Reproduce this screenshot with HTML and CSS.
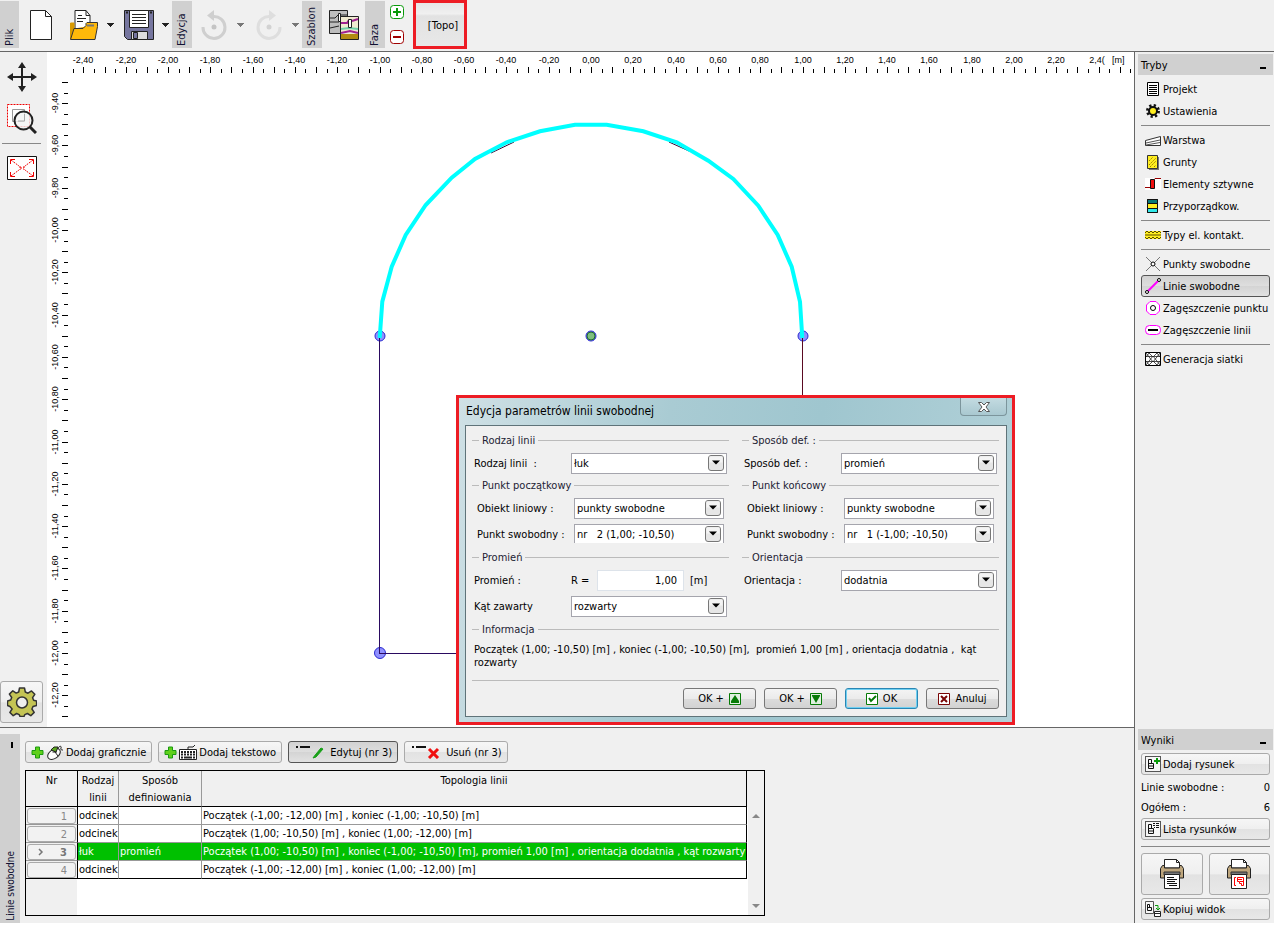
FILE: index.html
```html
<!DOCTYPE html>
<html lang="pl">
<head>
<meta charset="utf-8">
<title>Linie swobodne</title>
<link rel="stylesheet" href="styles.css">
</head>
<body>
<svg class="defs" aria-hidden="true">
  <symbol id="caret" viewBox="0 0 11 30"><path d="M2 13h7v1h-1v1h-1v1h-1v1h-1v-1h-1v-1h-1v-1h-1z" fill="currentColor"/></symbol>
  <symbol id="drop" viewBox="0 0 16 16"><rect x=".5" y=".5" width="15" height="15" rx="2.500" fill="#e6e6e6" stroke="#777"/><path d="M1.500 1.500h13v6h-13z" fill="#f4f4f4"/><path d="M4 5.500h8L8 9.500z" fill="#000"/></symbol>
  <symbol id="plus" viewBox="0 0 13 13"><path d="M4.500 1h4v3.500H12v4H8.500V12h-4V8.500H1v-4h3.500z" fill="#5fd01a" stroke="#1a9a10"/></symbol>
  <symbol id="doc" viewBox="0 0 16 16"><rect x=".5" y=".5" width="15" height="15" fill="#f6f6f6" stroke="#555"/><path d="M3.500 3.500h3v4h2v5h-5zM4 7.500h3M4 10h4" fill="none" stroke="#111"/></symbol>
  <symbol id="printer" viewBox="0 0 24 30"><path d="M4.500 9V.5h12l3 3V9z" fill="#fff" stroke="#222"/><path d="M16.500 .5v3h3" fill="none" stroke="#222"/><path d="M2.500 6.500h2V9h15V6.500h2l2 3V19H.5V9.500z" fill="#bda57c" stroke="#222"/><path d="M4 13h16v3H4z" fill="#777" stroke="#333"/></symbol>
</svg>
<div class="app">
  <header class="toolbar">
    <span class="group-label">Plik</span>
    <button class="tool first" type="button" aria-label="Nowy"><svg width="30" height="32" viewBox="0 0 30 32"><path d="M4.500 1.500h15l6 6v23h-21z" fill="#fff" stroke="#222"/><path d="M19.500 1.500v6h6" fill="none" stroke="#222"/></svg></button>
    <button class="tool file" type="button" aria-label="Otwórz"><svg width="30" height="32" viewBox="0 0 30 32"><path d="M6 25V1.500h11l4 5V25" fill="#fff" stroke="#222"/><path d="M17 1.500v5h4M9 6.500h4M8 9.500h9M8 12.500h6" fill="none" stroke="#222"/><path d="M1.500 30V14h3.500v6l20-3v13z" fill="#d99a00" stroke="#d99a00"/><path d="M5 19.500h9l3-3v-2l1-1h10.500v4L26 30.500H1.500z" fill="#ffb90a" stroke="#333"/><path d="M18 16.500h7" stroke="#777" stroke-width="2"/></svg></button>
    <button class="caret" type="button" aria-label="Ostatnie pliki"><svg width="11" height="30"><use href="#caret"/></svg></button>
    <button class="tool next" type="button" aria-label="Zapisz"><svg width="30" height="32" viewBox="0 0 30 32"><path d="M.5 1.500h29v29h-26l-3-3z" fill="#76769f" stroke="#222"/><path d="M5.500 1.500h19v17h-19z" fill="#fff" stroke="#222"/><path d="M8 5.500h14M8 8.500h14M8 11.500h14M8 14.500h14" stroke="#222"/><path d="M2 3.500h2M26 3.500h2" stroke="#222" stroke-width="2"/><path d="M7.500 22.500h16v8h-16z" fill="#ddd" stroke="#222"/><path d="M9.500 23.500h4v6h-4z" fill="#76769f" stroke="#222"/></svg></button>
    <button class="caret" type="button" aria-label="Opcje zapisu"><svg width="11" height="30"><use href="#caret"/></svg></button>
    <span class="group-label">Edycja</span>
    <button class="tool" type="button" aria-label="Cofnij" disabled><svg width="30" height="32" viewBox="0 0 30 32"><path d="M14 7.500A11 11 0 1 1 4 18" fill="none" stroke="#cfcfcf" stroke-width="3"/><path d="M15 1v11L8 6.500z" fill="#cfcfcf"/><circle cx="15" cy="18" r="2.500" fill="#c4c4c4"/></svg></button>
    <button class="caret dim" type="button" aria-label="Historia cofania"><svg width="11" height="30"><use href="#caret"/></svg></button>
    <button class="tool next" type="button" aria-label="Ponów" disabled><svg width="30" height="32" viewBox="0 0 30 32"><path d="M16 7.500A11 11 0 1 0 26 18" fill="none" stroke="#dedede" stroke-width="3"/><path d="M15 1v11l7-5.500z" fill="#dedede"/><circle cx="15" cy="18" r="2.500" fill="#d2d2d2"/></svg></button>
    <button class="caret dim" type="button" aria-label="Historia ponawiania"><svg width="11" height="30"><use href="#caret"/></svg></button>
    <span class="group-label">Szablon</span>
    <button class="tool" type="button" aria-label="Szablon"><svg width="30" height="32" viewBox="0 0 30 32"><path d="M.5 1.500h18v23H.5z" fill="#bdbdbd" stroke="#222"/><path d="M1 9h5l3-3h2M1 13h9M1 19l9-2M12 6h6" fill="none" stroke="#222"/><path d="M9.500 4.500h2v8h-2z" fill="#fff" stroke="#222"/><path d="M11.500 7.500h18v23h-18z" fill="#f0ead0" stroke="#222"/><path d="M12 25h17v5H12z" fill="#b38b12"/><path d="M12 24l9-2 8 2M12 14h6l2-3M23 12l6-2" fill="none" stroke="#a02090" stroke-width="2"/><path d="M12 20l8-1 9 1" fill="none" stroke="#6fd0a8" stroke-width="2"/><path d="M19.500 10.500h3v8h-3z" fill="#fff" stroke="#222"/></svg></button>
    <span class="group-label phase">Faza</span>
    <div class="phase-buttons">
      <button type="button" aria-label="Dodaj fazę"><svg width="14" height="14" viewBox="0 0 14 14"><rect x=".5" y=".5" width="13" height="13" rx="3" fill="#fff" stroke="#0a9a0a"/><path d="M3 7h8M7 3v8" stroke="#0a9a0a" stroke-width="2"/></svg></button>
      <button type="button" aria-label="Usuń fazę"><svg width="14" height="14" viewBox="0 0 14 14"><rect x=".5" y=".5" width="13" height="13" rx="3" fill="#fff" stroke="#a00000"/><path d="M3 7h8" stroke="#a00000" stroke-width="2"/></svg></button>
    </div>
    <button class="topo" type="button">[Topo]</button>
  </header>

  <div class="work">
    <nav class="side-tools" aria-label="Widok">
      <button type="button" aria-label="Przesuń"><svg width="30" height="30" viewBox="0 0 30 30"><path d="M15 4v22M4 15h22" stroke="#222" stroke-width="2"/><path d="M15 0l4 6h-8zM15 30l4-6h-8zM0 15l6-4v8zM30 15l-6-4v8z" fill="#222"/></svg></button>
      <button type="button" aria-label="Powiększ"><svg width="30" height="30" viewBox="0 0 30 30"><path d="M.5 .5h22v22H.5z" fill="#fff" stroke="#e00" stroke-dasharray="2 1"/><path d="M5.500 5.500h12v12h-12z" fill="none" stroke="#999"/><circle cx="16.500" cy="16.500" r="9" fill="#f4f4f4" fill-opacity=".8" stroke="#222" stroke-width="2"/><path d="M11 17h6.500v-7" fill="none" stroke="#aaa"/><path d="M23 23l6 6" stroke="#222" stroke-width="3"/></svg></button>
      <hr>
      <button type="button" aria-label="Dopasuj widok"><svg width="30" height="24" viewBox="0 0 30 24"><path d="M.5 .5h29v23H.5z" fill="#fff" stroke="#111"/><g fill="none" stroke="#e00"><path d="M4 4l8 6M26 4l-8 6M4 20l8-6M26 20l-8-6M13 10v4M17 10v4M13 12h4" stroke-dasharray="2 1"/><path d="M3.500 8V3.500H8M22 3.500h4.500V8M3.500 16v4.500H8M22 20.500h4.500V16"/></g></svg></button>
      <button class="gear" type="button" aria-label="Ustawienia widoku"><svg width="30" height="30" viewBox="0 0 30 30"><path d="M12.500 1h5l.8 4 2.700 1.200 3.500-2.300 3.300 3.400-2.200 3.400 1 2.600 3 .7v4.500l-3.600 1-1.100 2.500 2.300 3.400-3.400 3.300-3.400-2.200-2.600 1.100-.8 1.900h-4l-.8-1.900-2.600-1.100-3.400 2.200-3.300-3.300 2.200-3.400L3 19.500l-2.500-1V14l3.200-1 1-2.500-2.300-3.400 3.400-3.300 3.400 2.300L11.700 5z" fill="#c4c455" stroke="#333" stroke-width="1.500" stroke-linejoin="round"/><circle cx="15" cy="15.500" r="5.500" fill="#eee" stroke="#333" stroke-width="1.500"/></svg></button>
    </nav>

    <main class="canvas">
      <svg class="drawing" width="100%" height="100%" role="img" aria-label="Model topologii">
        <g transform="translate(-47 -52)">
          <g id="ruler-x"></g>
          <text class="ruler-text" x="1112" y="63">[m]</text>
          <g id="ruler-y"></g>
          <g fill="#9090ff" stroke="#2a2ad0">
            <circle cx="380" cy="336" r="5"/><circle cx="803" cy="336" r="5"/><circle cx="591" cy="336" r="5"/><circle cx="380" cy="653" r="5.500"/>
          </g>
          <circle cx="591" cy="336" r="4" fill="#7fbf7f" stroke="#1c6b2c"/>
          <path d="M379.500 336V653.500H802.500" fill="none" stroke="#2a0a60" shape-rendering="crispEdges"/>
          <path d="M802.500 336V653" stroke="#5a0a22" shape-rendering="crispEdges"/>
          <path d="M491 153l23-11M669 142l20 9" stroke="#3a0030"/>
          <path d="M379.700 338L382.300 301.700 391.700 266.700 405.700 235 425.700 205 451.700 177.700 475 159 506.700 142.300 540 131.300 575 124.700H606.700L643.300 131.300 676.700 142.300 708.300 160.700 733.300 179 758.300 205.700 777.700 235 791.700 266.700 800 301.700 802.300 338" fill="none" stroke="#0ff" stroke-width="4"/>
        </g>
      </svg>

      <section class="dialog" role="dialog" aria-labelledby="dlg-title">
        <div class="titlebar">
          <h1 id="dlg-title">Edycja parametrów linii swobodnej</h1>
          <button class="close" type="button" aria-label="Zamknij"><svg width="12" height="10" viewBox="0 0 12 10"><path d="M.5 .5h3L6 3 8.500 .5h3L8 5l3.500 4.500h-3L6 7 3.500 9.500h-3L4 5z" fill="#fff" stroke="#555"/></svg></button>
        </div>
        <form class="client">
          <div class="columns">
            <div class="column">
              <h2>Rodzaj linii</h2>
              <div class="row"><label for="kind">Rodzaj linii&nbsp; :</label><span class="pick"><select id="kind"><option>łuk</option></select><svg width="16" height="16"><use href="#drop"/></svg></span></div>
              <h2>Punkt początkowy</h2>
              <div class="row inner"><label for="obj1">Obiekt liniowy :</label><span class="pick"><select id="obj1"><option>punkty swobodne</option></select><svg width="16" height="16"><use href="#drop"/></svg></span></div>
              <div class="row inner cut"><label for="pt1">Punkt swobodny :</label><span class="pick"><select id="pt1"><option>nr&nbsp;&nbsp; 2 (1,00; -10,50)</option></select><svg width="16" height="16"><use href="#drop"/></svg></span></div>
              <h2>Promień</h2>
              <div class="row"><label for="radius">Promień :</label><span class="radius"><span>R =</span><input id="radius" type="text" value="1,00"><span>[m]</span></span></div>
              <div class="row second"><label for="angle">Kąt zawarty</label><span class="pick"><select id="angle"><option>rozwarty</option></select><svg width="16" height="16"><use href="#drop"/></svg></span></div>
            </div>
            <div class="column">
              <h2>Sposób def. :</h2>
              <div class="row"><label for="def">Sposób def. :</label><span class="pick"><select id="def"><option>promień</option></select><svg width="16" height="16"><use href="#drop"/></svg></span></div>
              <h2>Punkt końcowy</h2>
              <div class="row inner"><label for="obj2">Obiekt liniowy :</label><span class="pick"><select id="obj2"><option>punkty swobodne</option></select><svg width="16" height="16"><use href="#drop"/></svg></span></div>
              <div class="row inner cut"><label for="pt2">Punkt swobodny :</label><span class="pick"><select id="pt2"><option>nr&nbsp;&nbsp; 1 (-1,00; -10,50)</option></select><svg width="16" height="16"><use href="#drop"/></svg></span></div>
              <h2>Orientacja</h2>
              <div class="row"><label for="orient">Orientacja :</label><span class="pick"><select id="orient"><option>dodatnia</option></select><svg width="16" height="16"><use href="#drop"/></svg></span></div>
            </div>
          </div>
          <h2>Informacja</h2>
          <p class="info">Początek (1,00; -10,50) [m] , koniec (-1,00; -10,50) [m],&nbsp; promień 1,00 [m] , orientacja dodatnia ,&nbsp; kąt rozwarty</p>
          <div class="actions">
            <button type="button">OK + <svg width="12" height="12" viewBox="0 0 12 12"><path d="M.5 .5h11v11H.5z" fill="#dff0df" stroke="#067a06"/><path d="M6 2l4 6v2H2V8z" fill="#067a06"/></svg></button>
            <button type="button">OK + <svg width="12" height="12" viewBox="0 0 12 12"><path d="M.5 .5h11v11H.5z" fill="#dff0df" stroke="#067a06"/><path d="M2 2h8v1L6 10 2 3z" fill="#067a06"/></svg></button>
            <button class="default" type="button"><svg width="12" height="12" viewBox="0 0 12 12"><path d="M.5 .5h11v11H.5z" fill="#fff" stroke="#067a06"/><path d="M3 5l2 3 5-5" fill="none" stroke="#067a06" stroke-width="2"/></svg> OK</button>
            <button type="button"><svg width="12" height="12" viewBox="0 0 12 12"><path d="M.5 .5h11v11H.5z" fill="#fff" stroke="#7a0606"/><path d="M3 3l6 6M9 3l-6 6" stroke="#7a0606" stroke-width="2"/></svg> Anuluj</button>
          </div>
        </form>
      </section>
    </main>
  </div>

  <section class="bottom">
    <div class="strip"><i></i><span>Linie swobodne</span></div>
    <div class="panel">
      <div class="commands">
        <button type="button"><svg width="13" height="13"><use href="#plus"/></svg><svg width="18" height="15" viewBox="0 0 18 15"><ellipse cx="8" cy="9" rx="7" ry="4.500" transform="rotate(-35 8 9)" fill="#fff" stroke="#222"/><path d="M6 3l6 8M11 7L6.500 7" stroke="#222" fill="none"/><path d="M5 5l3-3 4 0-2 5z" fill="#5aa51e" stroke="#222"/><path d="M12 4c1-4 4-3 3-1s1 2 2 2" fill="none" stroke="#222"/></svg>Dodaj graficznie</button>
        <button type="button"><svg width="13" height="13"><use href="#plus"/></svg><svg width="18" height="15" viewBox="0 0 18 15"><path d="M9 4V2h5l2-2" fill="none" stroke="#222"/><path d="M.5 4.500h17v10H.5z" fill="#fff" stroke="#222"/><path d="M2 7h14M2 9.500h14" stroke="#222" stroke-width="2" stroke-dasharray="2 1"/><path d="M2 12.500h2M5 12.500h8M14 12.500h2" stroke="#222" stroke-width="2"/></svg>Dodaj tekstowo</button>
        <button class="pressed" type="button"><svg width="34" height="14" viewBox="0 0 34 14"><path d="M2 2h2M6 2h10" stroke="#111" stroke-width="2"/><path d="M20 11.500L27 3l2 1-7 8-3 1z" fill="#18a018" stroke="#18a018"/></svg>Edytuj (nr 3)</button>
        <button type="button"><svg width="34" height="14" viewBox="0 0 34 14"><path d="M2 2h2M6 2h10" stroke="#111" stroke-width="2"/><path d="M19 4l9 9M28 4l-9 9" stroke="#f01010" stroke-width="3"/></svg>Usuń (nr 3)</button>
      </div>
      <div class="grid-box">
        <table>
          <thead><tr><th>Nr</th><th>Rodzaj linii</th><th>Sposób definiowania</th><th>Topologia linii</th></tr></thead>
          <tbody>
            <tr><td><span class="num">1</span></td><td>odcinek</td><td></td><td>Początek (-1,00; -12,00) [m] , koniec (-1,00; -10,50) [m]</td></tr>
            <tr><td><span class="num">2</span></td><td>odcinek</td><td></td><td>Początek (1,00; -10,50) [m] , koniec (1,00; -12,00) [m]</td></tr>
            <tr class="selected"><td><span class="num"><svg width="6" height="8" viewBox="0 0 6 8"><path d="M1 1l3 3-3 3" fill="none" stroke="#777" stroke-width="1.500"/></svg>3</span></td><td>łuk</td><td>promień</td><td>Początek (1,00; -10,50) [m] , koniec (-1,00; -10,50) [m], promień 1,00 [m] , orientacja dodatnia , kąt rozwarty</td></tr>
            <tr><td><span class="num">4</span></td><td>odcinek</td><td></td><td>Początek (-1,00; -12,00) [m] , koniec (1,00; -12,00) [m]</td></tr>
          </tbody>
        </table>
        <div class="scroll"><svg width="8" height="5" viewBox="0 0 8 5"><path d="M0 5l4-4 4 4z" fill="#888"/></svg><svg width="8" height="5" viewBox="0 0 8 5"><path d="M0 0l4 4 4-4z" fill="#888"/></svg></div>
      </div>
    </div>
  </section>

  <aside class="modes">
    <div class="head"><span>Tryby</span><i></i></div>
    <nav class="mode-list">
      <button type="button"><svg width="16" height="16" viewBox="0 0 16 16"><path d="M2.500 1.500h11v13h-11z" fill="#fff" stroke="#000"/><path d="M4 4.500h8M4 6.500h8M4 8.500h8M4 10.500h8M4 12.500h8" stroke="#000"/></svg>Projekt</button>
      <button type="button"><svg width="16" height="16" viewBox="0 0 16 16"><circle cx="8" cy="8" r="5.500" fill="none" stroke="#111" stroke-width="3" stroke-dasharray="2.160"/><circle cx="8" cy="8" r="4" fill="#ffee20" stroke="#111" stroke-width="2"/></svg>Ustawienia</button>
      <hr>
      <button type="button"><svg width="16" height="16" viewBox="0 0 16 16"><path d="M.5 13.500v-5l15-4v9z" fill="#fff" stroke="#333"/><path d="M1 11l14-3M1 13l14-2.500" stroke="#555"/></svg>Warstwa</button>
      <button type="button"><svg width="16" height="16" viewBox="0 0 16 16"><path d="M4 3h10v13H4z" fill="#777"/><path d="M2.500 1.500h10v13h-10z" fill="#ffee20" stroke="#333"/><path d="M4 7l4-4M4 11l7-7M5 13l6-6M9 13l2-2" stroke="#a08000" stroke-dasharray="2 1"/></svg>Grunty</button>
      <button type="button"><svg width="16" height="16" viewBox="0 0 16 16"><path d="M0 2h16v12H0z" fill="#fff"/><path d="M0 11.500h5M9 3.500l1-1h6" fill="none" stroke="#900"/><path d="M5.500 3.500h4v9h-4z" fill="#f01010" stroke="#111"/></svg>Elementy sztywne</button>
      <button type="button"><svg width="16" height="16" viewBox="0 0 16 16"><path d="M2.500 1.500h10v13h-10z" fill="#ffee20" stroke="#111"/><path d="M2.500 1.500h10v4h-10z" fill="#087878" stroke="#111"/><path d="M2.500 10.500h10v4h-10z" fill="#30e8e8" stroke="#111"/></svg>Przyporządkow.</button>
      <hr>
      <button type="button"><svg width="16" height="16" viewBox="0 0 16 16"><path d="M0 4h16v8H0z" fill="#ffee20"/><path d="M0 6l2-2 2 2 2-2 2 2 2-2 2 2 2-2 2 2M0 10l2 2 2-2 2 2 2-2 2 2 2-2 2 2 2-2M0 8h16" fill="none" stroke="#5a4a00"/></svg>Typy el. kontakt.</button>
      <hr>
      <button type="button"><svg width="16" height="16" viewBox="0 0 16 16"><path d="M1 1l14 14M15 1L1 15" stroke="#777"/><circle cx="8" cy="8" r="2" fill="#fff" stroke="#000"/></svg>Punkty swobodne</button>
      <button class="active" type="button"><svg width="16" height="16" viewBox="0 0 16 16"><path d="M2 14L14 2" stroke="#f0f" stroke-width="2"/><circle cx="2" cy="14" r="1.500" fill="#fff" stroke="#000"/><circle cx="14" cy="2" r="1.500" fill="#fff" stroke="#000"/></svg>Linie swobodne</button>
      <button type="button"><svg width="16" height="16" viewBox="0 0 16 16"><path d="M5 1.500h6L14.500 5v6L11 14.500H5L1.500 11V5z" fill="#fff" stroke="#f0f"/><circle cx="8" cy="8" r="2.500" fill="none" stroke="#000"/></svg>Zagęszczenie punktu</button>
      <button type="button"><svg width="16" height="16" viewBox="0 0 16 16"><rect x=".5" y="3.500" width="15" height="9" rx="4" fill="#fff" stroke="#f0f"/><path d="M3 8h10" stroke="#000" stroke-width="2"/></svg>Zagęszczenie linii</button>
      <hr>
      <button type="button"><svg width="16" height="16" viewBox="0 0 16 16"><path d="M.5 1.500h15v13H.5z" fill="#fff" stroke="#000"/><path d="M1 5.500h14M1 10.500h14M1 2l7 9 7-9M1 14l7-9 7 9M1 6l3-4 4 4 4-4 3 4M1 10l3 4 4-4 4 4 3-4" fill="none" stroke="#222" stroke-width=".8"/></svg>Generacja siatki</button>
    </nav>
    <div class="head results"><span>Wyniki</span><i></i></div>
    <div class="result-list">
      <button class="raised" type="button"><svg width="16" height="16" viewBox="0 0 16 16"><use href="#doc"/><path d="M9 5h6M12 2v6" stroke="#0a9a0a" stroke-width="2"/></svg>Dodaj rysunek</button>
      <div class="count"><span>Linie swobodne :</span><span>0</span></div>
      <div class="count"><span>Ogółem :</span><span>6</span></div>
      <button class="raised" type="button"><svg width="16" height="16" viewBox="0 0 16 16"><use href="#doc"/><path d="M8 2.500h2M11 2.500h3M8 4.500h2M11 4.500h3M9 6.500h1M11 6.500h3" stroke="#111"/></svg>Lista rysunków</button>
      <hr>
      <div class="print">
        <button class="raised" type="button" aria-label="Drukuj raport"><svg width="24" height="30" viewBox="0 0 24 30"><use href="#printer"/><path d="M4.500 15.500h15v14h-15z" fill="#fff" stroke="#222"/><path d="M7 18.500h7M7 20.500h10M7 22.500h8M7 24.500h10M9 26.500h8" stroke="#111"/></svg></button>
        <button class="raised" type="button" aria-label="Drukuj rysunek"><svg width="24" height="30" viewBox="0 0 24 30"><use href="#printer"/><path d="M4.500 15.500h15v14h-15z" fill="#fff" stroke="#222"/><path d="M9 18.500H7.500v8H9M10.500 18.500h6v8h-2v-2h-2v-2h-2zM11 20.500h4M13 22.500h3" fill="none" stroke="#f00"/></svg></button>
      </div>
      <button class="raised" type="button"><svg width="16" height="16" viewBox="0 0 16 16"><path d="M.5 .5h8v12h-8z" fill="#f6f6f6" stroke="#555"/><path d="M2.500 3.500h2v3h2v3h-4zM3 6.500h2" fill="none" stroke="#111"/><path d="M10 4.500h3V8M11 7l2 2 2-2" fill="none" stroke="#0a9a0a"/><path d="M9.500 10.500h6v5h-6zM9 12.500h7" fill="#fff" stroke="#222"/></svg>Kopiuj widok</button>
    </div>
  </aside>
</div>
<script src="rulers.js"></script>
</body>
</html>
```
FILE: rulers.js
```js
// Draws the two rulers; one metre of the model is SCALE pixels long.
const NS = 'http://www.w3.org/2000/svg';
const SCALE = 211.5;
const ORIGIN_X = 591;
const ROW_TEN = 230;

function add(parent, name, attrs, text) {
  const node = document.createElementNS(NS, name);
  for (const key in attrs) node.setAttribute(key, attrs[key]);
  if (text) node.textContent = text;
  parent.appendChild(node);
}

const format = v => v.toFixed(2).replace('.', ',');
const rulerX = document.getElementById('ruler-x');
const rulerY = document.getElementById('ruler-y');

for (let i = -49; i <= 51; i++) {
  const x = Math.round(ORIGIN_X + i * SCALE / 20);
  const long = i % 2 === 0;
  add(rulerX, 'rect', { x, y: long ? 67 : 69, width: 1, height: long ? 6 : 4 });
  if (i % 4 === 0) {
    const last = i === 48;
    add(rulerX, 'text', { x: last ? x - 2 : x, y: 63, class: 'ruler-text mid' }, last ? '2,4(' : format(i / 20));
  }
}

for (let i = -14; i <= 46; i++) {
  const y = Math.round(ROW_TEN + i * SCALE / 20);
  const long = i % 2 === 0;
  add(rulerY, 'rect', { x: long ? 62 : 64, y, width: long ? 6 : 4, height: 1 });
  if (i % 4 === 0 && i > -13) {
    add(rulerY, 'text', { class: 'ruler-text mid', transform: `translate(58 ${y}) rotate(-90)` }, format(-10 - i / 20));
  }
}
```
FILE: styles.css
```css
* { box-sizing: border-box; }
body {
  margin: 0;
  background: #fff;
  color: #000;
  font: 11px/13px "DejaVu Sans Condensed", "Noto Sans", sans-serif;
}
button, select, input { font: inherit; color: inherit; margin: 0; }
button { padding: 0; border: 0; background: none; display: flex; align-items: center; }
svg { display: block; flex: none; }
h1, h2, p { margin: 0; font: inherit; }
hr { border: 0; border-top: 1px solid #888; margin: 3px 0; width: 100%; }
.defs { position: absolute; width: 0; height: 0; }

.app {
  display: grid;
  grid-template: 52px 1fr 196px / 1fr 140px;
  grid-template-areas: "bar bar" "work modes" "bottom modes";
  height: 100vh;
  min-height: 900px;
  padding: 0 7px 2px 0;
}

/* toolbar */
.toolbar { grid-area: bar; display: flex; background: #f0f0f0; border-bottom: 1px solid #666; }
.group-label {
  writing-mode: vertical-rl;
  transform: rotate(180deg);
  width: 20px;
  height: 47px;
  margin: 1px 0 0 1px;
  padding: 2px 0 0 0;
  line-height: 20px;
  background: #d0d0d0;
  color: #113;
}
.group-label:first-child { width: 19px; margin-left: 0; }
.group-label.phase { margin-left: 6px; }
.tool { height: 50px; margin-left: 7px; }
.tool.file { margin-left: 13px; }
.tool.next { margin-left: 8px; }
.caret { height: 50px; margin-left: 6px; color: #222; }
.caret.dim { color: #777; }
.phase-buttons { display: flex; flex-direction: column; gap: 11px; padding: 5px 0 0 5px; }
.topo {
  width: 54px;
  height: 49px;
  margin-left: 9px;
  padding: 2px 0 0 6px;
  justify-content: center;
  border: 3px solid #ed1c24;
  background: linear-gradient(#e6e6e6, #f0f0f0 25%, #e2e2e2 30%, #e8e8e8);
}

/* work area */
.work { grid-area: work; display: flex; min-width: 0; }
.side-tools {
  width: 47px;
  flex: none;
  display: flex;
  flex-direction: column;
  gap: 12px;
  padding: 10px 4px 4px 0;
  background: #f0f0f0;
}
.side-tools button { padding-left: 7px; }
.side-tools hr { width: 39px; margin: -3px 2px 0; }
.side-tools .gear {
  width: 43px;
  height: 42px;
  margin-top: auto;
  padding: 0;
  justify-content: center;
}
.gear, .raised, .commands button {
  border: 1px solid #aaa;
  border-radius: 3px;
  background: linear-gradient(#f6f6f6, #efefef 50%, #e2e2e2 52%, #e8e8e8);
}
.canvas { position: relative; flex: 1; min-width: 0; overflow: hidden; background: #fff; }
.drawing { position: absolute; inset: 0; }
.ruler-text { font: 9px "Liberation Sans", Arial, sans-serif; }
.mid { text-anchor: middle; }

/* dialog */
.dialog {
  position: absolute;
  left: 409px;
  top: 343px;
  width: 559px;
  border: 3px solid #ed1c24;
  padding: 0 5px 5px 6px;
  background: linear-gradient(100deg, #cfe0e5, #a9cbd3 35%, #9fc6cf 60%, #b4d2d9);
}
.titlebar { display: flex; justify-content: space-between; height: 27px; }
.titlebar h1 { padding: 6px 1px; font-size: 12px; line-height: 15px; }
.close {
  width: 47px;
  height: 18px;
  justify-content: center;
  border: 1px solid #7c959c;
  border-top: 0;
  border-radius: 0 0 4px 4px;
  background: linear-gradient(#c3dbe1, #a9c8d0);
}
.client { border: 1px solid #5f7379; background: #f0f0f0; padding: 5px 7px 7px 6px; }
.columns { display: grid; grid-template-columns: 1fr 1fr; gap: 13px; margin-bottom: 3px; }
h2 { display: flex; align-items: center; gap: 3px; height: 18px; white-space: nowrap; color: #223; }
h2::before, h2::after { content: ""; height: 1px; background: #bbb; }
h2::before { width: 7px; }
h2::after { flex: 1; }
.row { display: grid; grid-template-columns: 97px 1fr; align-items: center; height: 21px; margin: 4px 2px 2px; white-space: nowrap; }
.row.inner { margin-left: 5px; margin-right: 5px; }
.row.inner.cut { height: 19px; margin: 5px; overflow: hidden; align-items: start; }
.row.cut label { line-height: 21px; }
.row.second { margin: 5px 2px 0; }
.row.inner:not(.cut) { margin-bottom: 0; }
.pick { position: relative; display: block; }
.pick svg { position: absolute; right: 3px; top: 2px; pointer-events: none; }
.pick select {
  display: block;
  width: 100%;
  height: 21px;
  padding: 0 20px 0 2px;
  border: 1px solid #a5a5ad;
  border-radius: 0;
  background: #fff;
  appearance: none;
}
.radius { display: grid; grid-template-columns: 26px 87px 1fr; align-items: center; }
.radius input { width: 100%; height: 21px; padding: 0 6px; border: 1px solid #dde3ea; text-align: right; background: #fff; }
.radius span:last-child { padding-left: 6px; }
.info { padding: 5px 8px 11px 2px; height: 42px; }
.actions { display: flex; justify-content: flex-end; gap: 8px; padding-top: 7px; border-top: 1px solid #bbb; }
.actions button {
  width: 73px;
  height: 21px;
  justify-content: center;
  gap: 5px;
  border: 1px solid #777;
  border-radius: 3px;
  background: linear-gradient(#f4f4f4, #ebebeb 50%, #dcdcdc 52%, #d2d2d2);
}
.actions .default { border-color: #2a86b4; box-shadow: inset 0 0 0 1px #6fd0f2; }

/* bottom panel */
.bottom { grid-area: bottom; display: flex; gap: 5px; padding-top: 6px; background: #f0f0f0; border-top: 1px solid #666; min-width: 0; }
.strip { display: flex; flex-direction: column; justify-content: space-between; align-items: center; width: 20px; background: #d0d0d0; padding: 8px 0 2px; }
.strip i { width: 2px; height: 6px; margin-left: 4px; background: #000; }
.strip span { writing-mode: vertical-rl; transform: rotate(180deg); font-size: 10px; color: #113; }
.panel { padding-top: 7px; min-width: 0; }
.commands { display: flex; gap: 6px; margin-bottom: 7px; }
.commands button { height: 22px; gap: 2px; padding: 0 5px; white-space: nowrap; }
.commands .pressed, .mode-list .active {
  border: 1px solid #555;
  border-radius: 3px;
  background: linear-gradient(#d2d2d2, #dedede 50%, #d4d4d4 52%, #e2e2e2);
}
.grid-box {
  display: flex;
  justify-content: space-between;
  align-items: flex-start;
  width: 740px;
  height: 146px;
  border: 1px solid #000;
  background: linear-gradient(#f0f0f0, #f0f0f0) right top / 18px 36px no-repeat, linear-gradient(90deg, #f0f0f0 51px, #fff 51px);
}
table { width: 721px; table-layout: fixed; border-collapse: separate; border-spacing: 0; }
th, td { padding: 0 0 0 1px; border-right: 1px solid #999; border-bottom: 1px solid #999; font-weight: 400; text-align: left; white-space: nowrap; overflow: hidden; height: 18px; line-height: 17px; background: #fff; }
th { height: 36px; padding: 0; line-height: 17px; white-space: normal; text-align: center; vertical-align: top; background: #f0f0f0; border-bottom-color: #000; padding-top: 1px; }
th:nth-child(1) { width: 52px; }
th:nth-child(2) { width: 41px; }
th:nth-child(3) { width: 83px; }
th:first-child, td:first-child { border-right-color: #000; background: #f0f0f0; padding-left: 1px; padding-right: 1px; }
th:last-child, td:last-child { border-right-color: #000; }
tr:last-child td { border-bottom-color: #000; }
thead tr:last-child th { border-bottom-color: #000; }
.selected td:not(:first-child) { background: #00c000; color: #fff; }
.num { display: flex; justify-content: flex-end; align-items: center; gap: 16px; height: 16px; padding: 1px 8px 0 0; border: 1px solid #aaa; border-radius: 3px; color: #888; background: #f2f2f2; }
.selected .num { font-weight: 700; color: #777; }
.scroll { display: flex; flex-direction: column; justify-content: space-between; align-items: center; align-self: stretch; width: 16px; margin-top: 36px; padding: 6px 0; background: #f0f0f0; }

/* modes and results */
.modes { grid-area: modes; display: flex; flex-direction: column; background: #f0f0f0; border-left: 1px solid #666; padding: 2px 1px 3px 3px; }
.head { display: flex; justify-content: space-between; align-items: center; height: 21px; padding: 1px 7px 0 3px; background: #d0d0d0; }
.head i { width: 6px; height: 2px; margin-top: 6px; background: #000; }
.mode-list, .result-list { padding: 3px; }
.mode-list button { width: 100%; height: 22px; padding: 0 0 0 3px; gap: 2px; border: 1px solid transparent; white-space: nowrap; }
.results { margin-top: auto; }
.result-list { padding-bottom: 0; }
.result-list .raised { width: 100%; height: 22px; padding-left: 3px; gap: 2px; white-space: nowrap; }
.count { display: flex; justify-content: space-between; height: 20px; line-height: 25px; }
.count + .raised { margin-top: 3px; }
.result-list hr { margin: 6px 0; }
.result-list .print { display: flex; gap: 6px; margin-bottom: 3px; }
.result-list .print .raised { height: 42px; padding: 0; justify-content: center; }
```
